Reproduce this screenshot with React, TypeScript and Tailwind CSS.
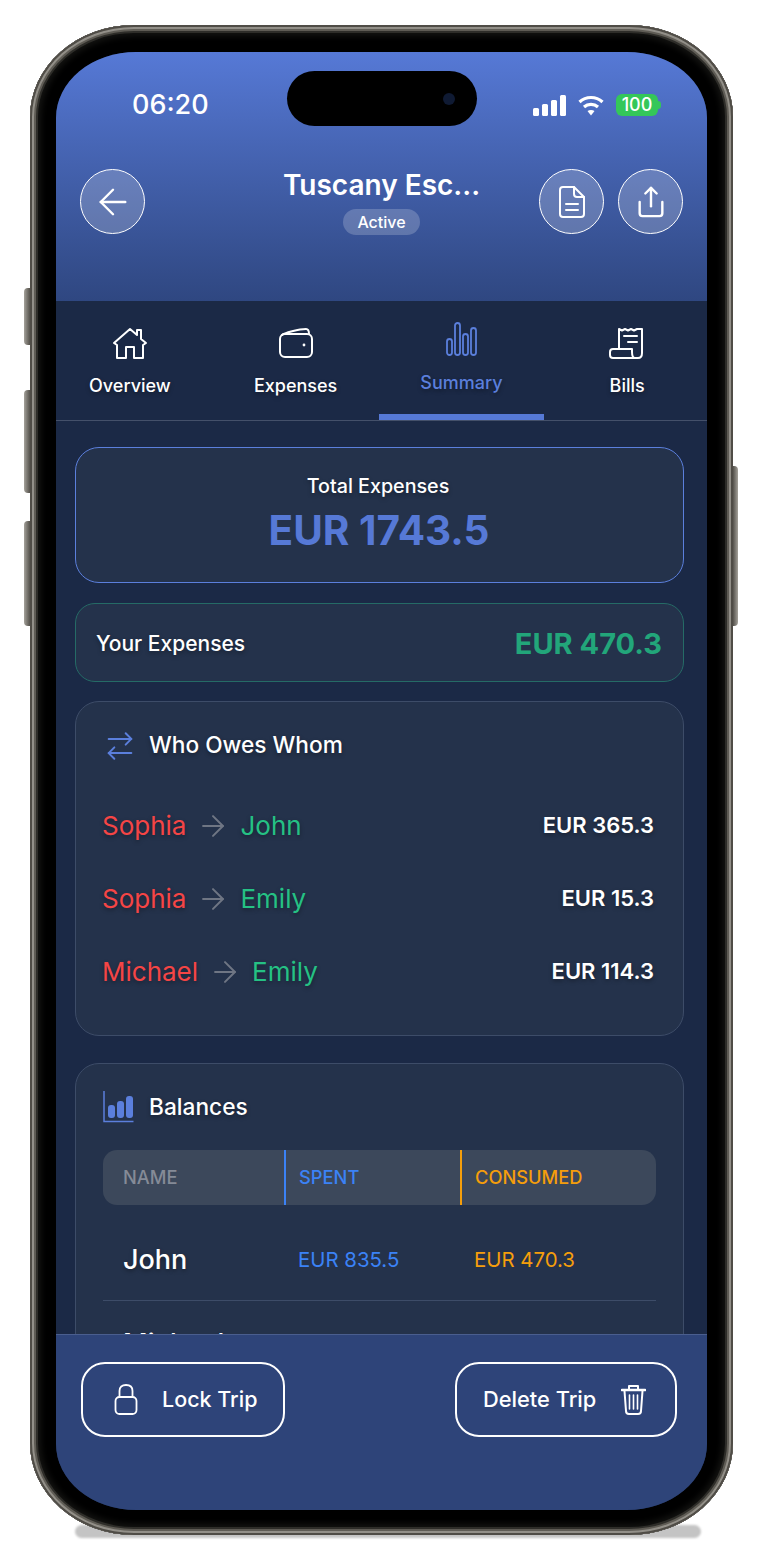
import { ArrowLeft, ArrowRight, ArrowRightLeft, Share } from 'lucide-react';

const shadow = '[text-shadow:0_2px_4px_rgba(0,0,0,0.35)]';

function HomeIcon() {
  return (
    <svg width="36" height="33" viewBox="0 0 36 33" fill="none" stroke="white" strokeWidth="2" strokeLinejoin="round" strokeLinecap="round">
      <path d="M2 16 L18 2 L25 8 V3 H29 V12 L34 16 L31 18 V31 H22 V20 H14 V31 H5 V18 Z" />
    </svg>
  );
}

function WalletIcon() {
  return (
    <svg width="34" height="30" viewBox="0 0 34 30" fill="none" stroke="white" strokeWidth="2" strokeLinecap="round" strokeLinejoin="round">
      <rect x="1" y="6" width="32" height="23" rx="5" />
      <path d="M3 7 C5 5 20 1 27 1 C29 1 30 3 30 6" />
      <circle cx="25" cy="17" r="1.4" fill="white" stroke="none" />
    </svg>
  );
}

function BarsIcon() {
  return (
    <svg width="31" height="34" viewBox="0 0 31 34" fill="none" stroke="#5b7fdc" strokeWidth="1.8">
      <rect x="1" y="17" width="5" height="16" rx="2.5" />
      <rect x="9" y="1" width="5" height="32" rx="2.5" />
      <rect x="17" y="12" width="5" height="21" rx="2.5" />
      <rect x="25" y="6" width="5" height="27" rx="2.5" />
    </svg>
  );
}

function BillIcon() {
  return (
    <svg width="36" height="33" viewBox="0 0 36 33" fill="none" stroke="white" strokeWidth="2" strokeLinecap="round" strokeLinejoin="round">
      <path d="M10 21 V2 L13 3.5 L16 2 L19 3.5 L22 2 L25 3.5 L28 2 L33 2 V26 C33 29 32 31 29 31 H7" />
      <path d="M15 9 H28 M19 15 H28" />
      <path d="M26 31 C24 31 23 29 23 25 V22 H4 C2 22 1 23 1 25 V28 C1 30 2 31 4 31 H26 Z" />
    </svg>
  );
}

function DocIcon() {
  return (
    <svg width="26" height="32" viewBox="0 0 26 32" fill="none" stroke="white" strokeWidth="2" strokeLinecap="round" strokeLinejoin="round">
      <path d="M4 1 H15 L25 11 V28 C25 30 24 31 22 31 H4 C2 31 1 30 1 28 V4 C1 2 2 1 4 1 Z" />
      <path d="M15 1 V8 C15 10 16 11 18 11 H25" />
      <path d="M7 18 H19 M7 24 H19" />
    </svg>
  );
}

function BalanceIcon() {
  return (
    <svg width="31" height="32" viewBox="0 0 31 32" fill="none">
      <path d="M1 0 V30.5 H30.5" stroke="#5b7fdc" strokeWidth="1.5" />
      <rect x="5" y="14" width="7" height="13" rx="3" fill="#5b7fdc" />
      <rect x="14" y="10" width="7" height="17" rx="3" fill="#5b7fdc" />
      <rect x="23" y="5" width="7" height="22" rx="3" fill="#5b7fdc" />
    </svg>
  );
}

function LockIcon() {
  return (
    <svg width="24" height="31" viewBox="0 0 24 31" fill="none" stroke="white" strokeWidth="1.8" strokeLinecap="round">
      <rect x="1.5" y="13" width="21" height="17" rx="4" />
      <path d="M5.5 13 V7 C5.5 3 8 1 12 1 C16 1 18.5 3 18.5 7 V13" />
    </svg>
  );
}

function TrashIcon() {
  return (
    <svg width="25" height="31" viewBox="0 0 25 31" fill="none" stroke="white" strokeWidth="2" strokeLinecap="round" strokeLinejoin="round">
      <path d="M1 6 H24" strokeWidth="2.6" />
      <path d="M8 5 V2 H17 V5" />
      <path d="M3.5 7 L5 27 C5 29 6 30 8 30 H17 C19 30 20 29 20 27 L21.5 7" />
      <path d="M8.5 11 V25 M12.5 11 V25 M16.5 11 V25" strokeWidth="1.6" />
    </svg>
  );
}

function CircleButton({ children }: { children: React.ReactNode }) {
  return (
    <button className="w-[65px] h-[65px] rounded-full border-[1.5px] border-white bg-white/20 flex items-center justify-center text-white shrink-0">
      {children}
    </button>
  );
}

function Debt({ from, to, amount }: { from: string; to: string; amount: string }) {
  return (
    <div className={`flex items-center justify-between h-[73px] ${shadow}`}>
      <div className="flex items-center text-[26px] -ml-[1px]">
        <span className="text-[#f54545]">{from}</span>
        <ArrowRight className="mx-[10px] text-[#6f7684]" size={34} strokeWidth={1.4} />
        <span className="text-[#25c184]">{to}</span>
      </div>
      <span className="text-[22px] font-semibold text-white">{amount}</span>
    </div>
  );
}

export default function App() {
  const tabs = [
    { label: 'Overview', icon: <HomeIcon /> },
    { label: 'Expenses', icon: <WalletIcon /> },
    { label: 'Summary', icon: <BarsIcon />, active: true },
    { label: 'Bills', icon: <BillIcon /> },
  ];

  return (
    <div className="relative w-[762px] h-[1564px] bg-white pt-[25px] pl-[30px] overflow-hidden font-['Inter',sans-serif]">
      {/* side buttons */}
      <div className="absolute left-[24px] top-[288px] w-[6px] h-[57px] rounded-l-sm bg-gradient-to-r from-[#a5a29b] to-[#55524c]" />
      <div className="absolute left-[24px] top-[390px] w-[6px] h-[103px] rounded-l-sm bg-gradient-to-r from-[#a5a29b] to-[#55524c]" />
      <div className="absolute left-[24px] top-[521px] w-[6px] h-[105px] rounded-l-sm bg-gradient-to-r from-[#a5a29b] to-[#55524c]" />
      <div className="absolute left-[733px] top-[466px] w-[5px] h-[160px] rounded-r-sm bg-gradient-to-l from-[#a5a29b] to-[#55524c]" />
      {/* shadow under the phone */}
      <div className="absolute left-[75px] top-[1525px] w-[626px] h-[13px] rounded-full bg-[#c4c4c4] blur-[1px]" />

      <div className="relative w-[703px] h-[1510px] rounded-[104px/92px] bg-black px-[26px] pt-[27px] shadow-[inset_0_0_0_2px_#4f4c46,inset_0_0_0_4px_#928f88,inset_0_0_0_6px_#5f5c55,inset_0_0_0_8px_#2e2d29,inset_0_0_6px_11px_#141412]">
        <div className="w-[651px] h-[1458px] rounded-[80px/66px] overflow-hidden flex flex-col bg-[#1b2946] text-white">
          {/* header */}
          <div className="h-[249px] shrink-0 bg-gradient-to-b from-[#5679d6] to-[#2f4781] px-[24px]">
            <div className="flex items-center pt-[19px] -mx-[24px] pl-[76px]">
              <span className="w-[155px] mt-[13px] text-[27px] font-medium">06:20</span>
              <div className="w-[190px] h-[55px] rounded-full bg-black flex items-center justify-end pr-[22px]">
                <div className="w-[12px] h-[12px] rounded-full bg-[#0f1a33]" />
              </div>
              <svg className="ml-[56px] mt-[13px]" width="33" height="21" viewBox="0 0 33 21" fill="white">
                <rect x="0" y="13" width="6" height="8" rx="1.5" />
                <rect x="9" y="9" width="6" height="12" rx="1.5" />
                <rect x="18" y="5" width="6" height="16" rx="1.5" />
                <rect x="27" y="0" width="6" height="21" rx="1.5" />
              </svg>
              <svg className="ml-[12px] mt-[13px]" width="26" height="21" viewBox="0 0 26 21" fill="none" stroke="white" strokeWidth="3.2">
                <path d="M1.5 7 C8 1 18 1 24.5 7" />
                <path d="M6 12 C10 8.5 16 8.5 20 12" />
                <path d="M13 20.5 L9.5 16 C11.5 14.5 14.5 14.5 16.5 16 Z" fill="white" stroke="none" />
              </svg>
              <div className="ml-[12px] mt-[13px] w-[42px] h-[22px] rounded-[6px] bg-[#34c759] text-[18px] leading-[22px] font-medium text-center">100</div>
              <div className="mt-[13px] w-[3px] h-[8px] rounded-r-sm bg-[#34c759]" />
            </div>

            <div className="flex items-center mt-[42px]">
              <div className="w-[144px]">
                <CircleButton><ArrowLeft size={42} strokeWidth={1.4} /></CircleButton>
              </div>
              <div className="flex-1 flex flex-col items-center">
                <span className="text-[28px] leading-[34px] font-semibold whitespace-nowrap">Tuscany Esc...</span>
                <span className="mt-[7px] px-[14px] h-[26px] rounded-full bg-white/20 text-[16px] leading-[26px] font-medium">Active</span>
              </div>
              <div className="w-[144px] flex gap-[14px]">
                <CircleButton><DocIcon /></CircleButton>
                <CircleButton><Share size={34} strokeWidth={1.7} /></CircleButton>
              </div>
            </div>
          </div>

          {/* tabs */}
          <div className="h-[120px] shrink-0 border-b border-[#44506a] overflow-hidden">
            <div className="flex w-[663px] -ml-[9px] h-full">
              {tabs.map(t => (
                <div key={t.label} className={`flex-1 flex flex-col items-center ${t.active ? 'pt-[21px] border-b-[6px] border-[#5679d6]' : 'pt-[25px]'}`}>
                  <div className="h-[34px] flex items-center justify-center">{t.icon}</div>
                  <span className={`text-[18px] font-medium ${t.active ? 'mt-[13px] text-[#5b7fdc]' : 'mt-[12px] text-white'} ${shadow}`}>{t.label}</span>
                </div>
              ))}
            </div>
          </div>

          {/* content */}
          <main className="flex-1 min-h-0 overflow-hidden pl-[19px] pr-[23px] pt-[26px]">
            <div className="h-[136px] rounded-[24px] border-[1.5px] border-[#5b7fdc] bg-[#24324b] flex flex-col items-center justify-center">
              <span className={`text-[19.7px] font-medium -ml-[3px] ${shadow}`}>Total Expenses</span>
              <span className="mt-[2px] text-[40.5px] leading-[54px] font-bold text-[#5679d6] -ml-[1px]">EUR 1743.5</span>
            </div>

            <div className="mt-[20px] h-[79px] rounded-[20px] border border-[#256b66] bg-[#24324b] flex items-center justify-between pl-[20px] pr-[21px] pt-[3px]">
              <span className={`text-[21px] font-medium ${shadow}`}>Your Expenses</span>
              <span className="text-[29px] font-bold text-[#22a67a]">EUR 470.3</span>
            </div>

            <div className="mt-[19px] h-[335px] rounded-[24px] border border-[#3d4c68] bg-[#24324b] pl-[27px] pr-[29px]">
              <div className="flex items-center h-[87px]">
                <ArrowRightLeft className="text-[#5b7fdc]" size={34} strokeWidth={1.4} />
                <span className={`ml-[12px] text-[22.7px] font-medium ${shadow}`}>Who Owes Whom</span>
              </div>
              <Debt from="Sophia" to="John" amount="EUR 365.3" />
              <Debt from="Sophia" to="Emily" amount="EUR 15.3" />
              <Debt from="Michael" to="Emily" amount="EUR 114.3" />
            </div>

            <div className="mt-[27px] rounded-[24px] border border-[#3d4c68] bg-[#24324b] px-[27px] pb-[40px]">
              <div className="flex items-center h-[86px]">
                <BalanceIcon />
                <span className={`ml-[15px] text-[22.7px] font-medium ${shadow}`}>Balances</span>
              </div>
              <div className="grid grid-cols-[181px_176px_1fr] h-[55px] rounded-[14px] bg-[#3c485b] text-[18.3px] font-medium">
                <span className="pl-[20px] self-center text-[#858b97]">NAME</span>
                <span className="pl-[13px] flex items-center border-l-2 border-[#3b82f6] text-[#3b82f6]">SPENT</span>
                <span className="pl-[13px] flex items-center border-l-2 border-[#f59e0b] text-[#f59e0b]">CONSUMED</span>
              </div>
              <div className="grid grid-cols-[181px_176px_1fr] h-[96px] pt-[15px] items-center border-b border-[#3d4c68] text-[20.4px]">
                <span className={`pl-[20px] text-[27px] font-medium ${shadow}`}>John</span>
                <span className="pl-[14px] text-[#3b82f6]">EUR 835.5</span>
                <span className="pl-[14px] text-[#f59e0b]">EUR 470.3</span>
              </div>
              <div className="h-[95px] pt-[23px] pl-[20px]">
                <span className={`text-[27px] font-medium ${shadow}`}>Michael</span>
              </div>
            </div>
          </main>

          {/* footer */}
          <div className="h-[176px] shrink-0 border-t border-[#4a5e8e] bg-[#2e4479] flex justify-between pl-[25px] pr-[30px] pt-[27px]">
            <button className="w-[204px] h-[75px] rounded-[24px] border-2 border-white flex items-center pl-[31px] gap-[24px] text-[21.5px] font-medium">
              <LockIcon />
              <span>Lock Trip</span>
            </button>
            <button className="w-[222px] h-[75px] rounded-[24px] border-2 border-white flex items-center pl-[26px] gap-[25px] text-[21.8px] font-medium">
              <span>Delete Trip</span>
              <TrashIcon />
            </button>
          </div>
        </div>
      </div>
    </div>
  );
}
